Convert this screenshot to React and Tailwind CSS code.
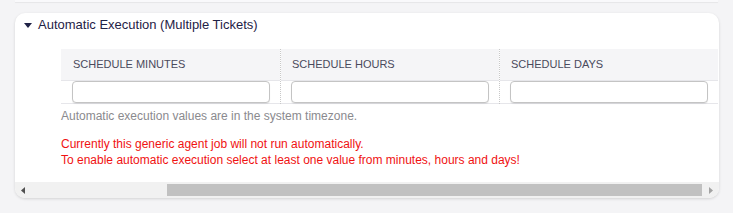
const columns = ['Schedule Minutes', 'Schedule Hours', 'Schedule Days'];

const App = () => {
    return (
        <div className="min-h-screen bg-[#f4f4f6] font-['Liberation_Sans',Arial,sans-serif]">
            {/* bottom edge of the widget above */}
            <div className="h-[2px] mx-[15px] bg-[#f9f9fb] shadow-[0_1px_1px_rgba(0,0,0,0.06)]"></div>

            <div className="mt-[11px] ml-[15px] w-[704px] h-[185px] bg-white rounded-[10px] shadow-[0_1px_3px_rgba(0,0,0,0.14)] overflow-hidden flex flex-col">
                {/* Widget header */}
                <div className="h-[24px] flex items-center pl-[9px] gap-[6px] text-[13px] text-[#1f2246]">
                    <svg width="8" height="6" viewBox="0 0 8 6" className="mt-[1px]">
                        <polygon points="0,0 8,0 4,5" fill="#1f2246" />
                    </svg>
                    <span>Automatic Execution (Multiple Tickets)</span>
                </div>

                {/* Content */}
                <div className="mt-[12px] pl-[46px] overflow-hidden">
                    <div className="flex w-[700px]">
                        {columns.map((col, i) => (
                            <div
                                key={col}
                                className={`shrink-0 w-[219px] ${i > 0 ? 'border-l border-dotted border-[#c8c8c8]' : ''}`}
                            >
                                <div className={`h-[31px] bg-[#f5f5f7] flex items-center ${i > 0 ? 'pl-[11px]' : 'pl-[12px]'} text-[11px] uppercase text-[#4a4a5c]`}>
                                    {col}
                                </div>
                                <div className={`h-[24px] border-t border-b border-[#e6e6ea] flex items-center ${i > 0 ? 'pl-[10px]' : 'pl-[11px]'}`}>
                                    <input
                                        type="text"
                                        className="w-[198px] h-[22px] rounded-[4px] border border-[#c4c4c4] bg-white shadow-[0_1px_1px_rgba(0,0,0,0.08)] outline-none"
                                    />
                                </div>
                            </div>
                        ))}
                    </div>

                    <p className="mt-[4px] text-[12px] leading-[16px] text-[#8a8a8e]">
                        Automatic execution values are in the system timezone.
                    </p>
                    <p className="mt-[12px] text-[12px] leading-[16px] text-[#f01212]">
                        Currently this generic agent job will not run automatically.
                        <br />
                        To enable automatic execution select at least one value from minutes, hours and days!
                    </p>
                </div>

                {/* Horizontal scrollbar */}
                <div className="mt-auto h-[16px] bg-[#f1f1f1] flex items-center">
                    <div className="w-[16px] h-full flex items-center justify-center">
                        <svg width="4" height="7" viewBox="0 0 4 7">
                            <polygon points="4,0 4,7 0,3.5" fill="#505050" />
                        </svg>
                    </div>
                    <div className="flex-1 h-full flex items-center">
                        <div className="ml-[136px] mr-[1px] flex-1 h-[12px] bg-[#c1c1c1]"></div>
                    </div>
                    <div className="w-[16px] h-full flex items-center justify-center">
                        <svg width="4" height="7" viewBox="0 0 4 7">
                            <polygon points="0,0 0,7 4,3.5" fill="#a3a3a3" />
                        </svg>
                    </div>
                </div>
            </div>
        </div>
    );
};

export default App;
